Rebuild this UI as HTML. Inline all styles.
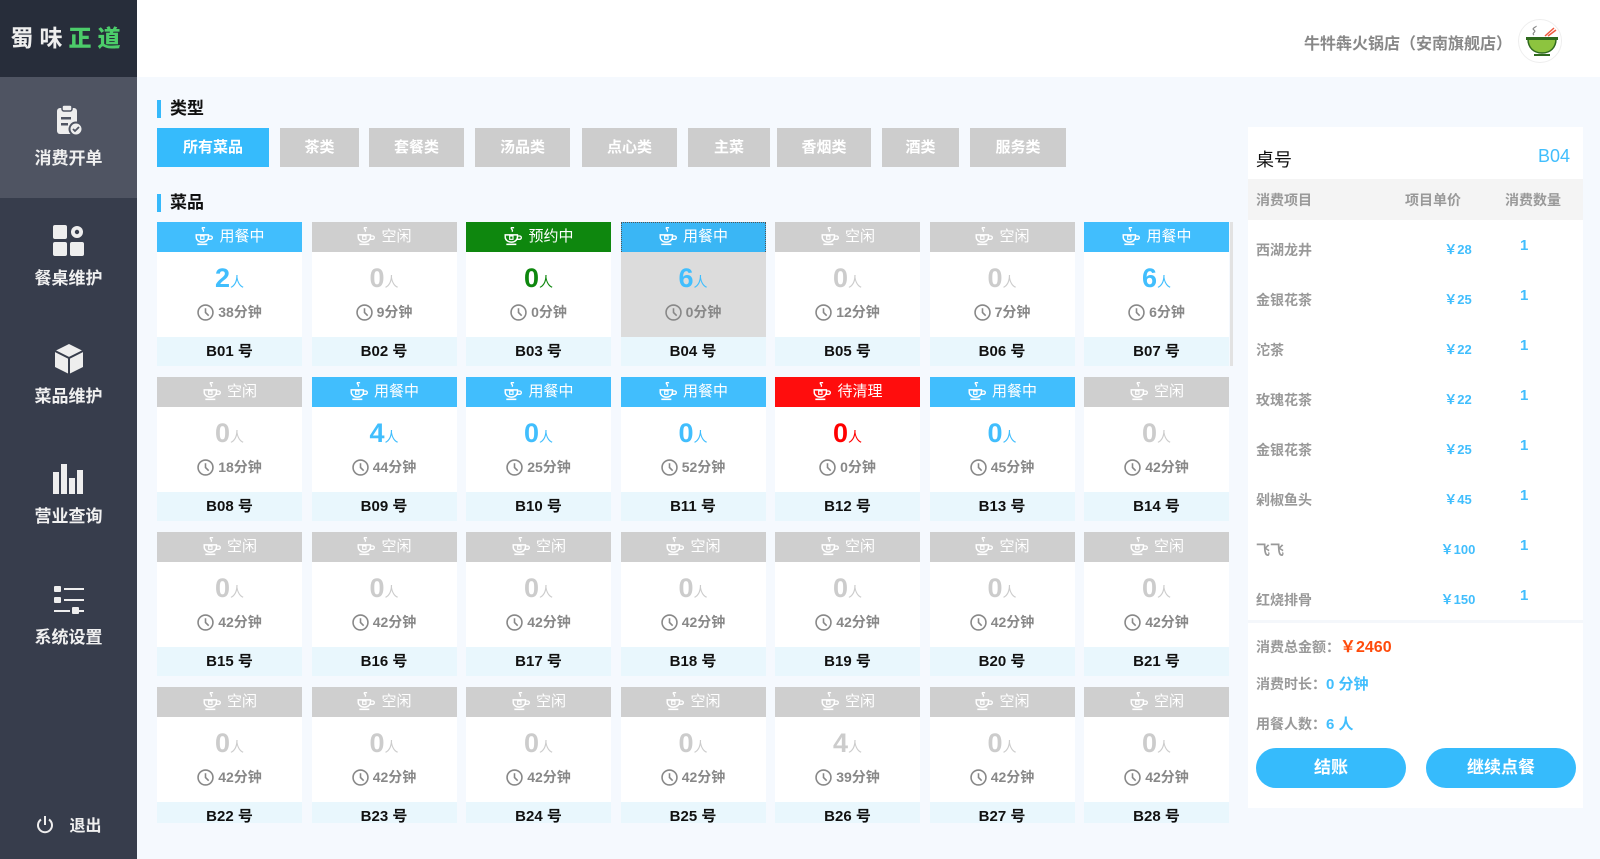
<!DOCTYPE html>
<html><head><meta charset="utf-8"><style>
*{margin:0;padding:0;box-sizing:border-box}
body{width:1600px;height:859px;overflow:hidden;background:#f5f9fe;font-family:"Liberation Sans","Noto Sans CJK SC",sans-serif;position:relative}
.side{position:absolute;left:0;top:0;width:137px;height:859px;background:#373d4c}
.logo{position:absolute;left:0;top:0;width:137px;height:77px;background:#272d3a;color:#eee;font-size:23px;font-weight:bold;text-align:center;line-height:77px;letter-spacing:6px}
.logo b{color:#4ccc6a}
.active{position:absolute;left:0;top:77px;width:137px;height:121px;background:#4f5462}
.mi{position:absolute;left:0;width:137px;text-align:center;color:#f0f0f0;font-size:17px;font-weight:bold}
.mi svg{display:block;margin:0 auto 6px}
.top{position:absolute;left:137px;top:0;right:0;height:77px;background:#fff}
.store{position:absolute;left:1304px;top:30px;color:#888;font-size:16px;font-weight:bold}
.av{position:absolute;left:1518px;top:19px;width:44px;height:44px;border-radius:50%;border:1px solid #eee;background:#fff}
.ttl{position:absolute;left:157px;font-size:17px;font-weight:bold;color:#111;padding-left:9px;border-left:4px solid #36b9fb;line-height:18px}
.tab{position:absolute;top:128px;height:39px;background:#cdcdcd;color:#fff;font-size:15px;font-weight:bold;text-align:center;line-height:39px}
.grid{position:absolute;left:157px;top:222px;width:1075px;height:601px;overflow:hidden;display:grid;grid-template-columns:repeat(7,145px);column-gap:9.5px;row-gap:11px;grid-auto-rows:144px}
.c{background:#fff;position:relative}
.h{height:30px;color:#fff;font-size:15px;text-align:center;line-height:30px}
.h svg{vertical-align:-5px;margin-right:5px}
.u{background:#41befd}.i{background:#cfcfcf}.g{background:#0e870e}.r{background:#ff0d0d}
.n{position:absolute;top:41px;width:100%;text-align:center;font-size:27px;font-weight:bold;line-height:30px}
.n small{font-size:14px;font-weight:normal}
.t{position:absolute;top:80px;width:100%;text-align:center;color:#888;font-size:14px;font-weight:bold}
.t svg{vertical-align:-4px;margin-right:4px}
.f{position:absolute;top:115px;height:29px;width:100%;background:#e9f7fd;text-align:center;line-height:29px;font-weight:bold;font-size:15px;color:#111}
.sel .b{position:absolute;top:30px;left:0;width:100%;height:85px;background:#dcdcdc}
.sel{outline:1px dotted #555;outline-offset:-1px}
.panel{position:absolute;left:1248px;top:127px;width:335px;height:681px;background:#fff}
.ph{position:absolute;left:1248px;top:179px;width:335px;height:41px;background:#f4f4f4;color:#999;font-size:14px;font-weight:bold}
.row{position:absolute;left:1256px;font-size:14px;font-weight:bold;color:#999}
.pr{position:absolute;left:1430px;width:56px;text-align:center;color:#41befd;font-size:13px;font-weight:bold}
.q{position:absolute;left:1520px;color:#41befd;font-size:15px;font-weight:bold}
.sum{position:absolute;left:1256px;font-size:14px;font-weight:bold;color:#999}
.btn{position:absolute;top:748px;width:150px;height:40px;border-radius:20px;background:#36bbfc;color:#fff;font-size:17px;font-weight:bold;text-align:center;line-height:40px}
</style></head><body>
<div class="side">
<div class="logo">蜀味<b>正道</b></div>
<div class="active"></div>
<div class="mi" style="top:104px"><svg width="30" height="34" viewBox="0 0 30 34"><rect x="3" y="4" width="20" height="26" rx="3" fill="#eee"/><rect x="8" y="1" width="10" height="6" rx="2" fill="#eee" stroke="#4f5462" stroke-width="1.5"/><rect x="7" y="13" width="10" height="2.5" fill="#4f5462"/><rect x="7" y="19" width="7" height="2.5" fill="#4f5462"/><circle cx="22" cy="25" r="6.5" fill="#eee" stroke="#4f5462" stroke-width="2"/><path d="M19 25l2 2 4-4" stroke="#4f5462" stroke-width="1.8" fill="none"/></svg>消费开单</div>
<div class="mi" style="top:224px"><svg width="34" height="34" viewBox="0 0 34 34"><rect x="1" y="1" width="14" height="14" rx="2" fill="#eee"/><circle cx="25" cy="8" r="6" fill="#eee"/><circle cx="25" cy="8" r="2.2" fill="#373d4c"/><rect x="1" y="18" width="14" height="14" rx="2" fill="#eee"/><rect x="18" y="18" width="14" height="14" rx="2" fill="#eee"/></svg>餐桌维护</div>
<div class="mi" style="top:342px"><svg width="32" height="34" viewBox="0 0 32 34"><path d="M16 2L30 9V25L16 32L2 25V9Z" fill="#eee"/><path d="M2 9L16 16L30 9M16 16V32" stroke="#373d4c" stroke-width="2" fill="none"/></svg>菜品维护</div>
<div class="mi" style="top:462px"><svg width="36" height="34" viewBox="0 0 36 34"><rect x="2" y="10" width="6" height="22" fill="#eee"/><rect x="10" y="2" width="6" height="30" fill="#eee"/><rect x="18" y="16" width="6" height="16" fill="#eee"/><rect x="26" y="8" width="6" height="24" fill="#eee"/></svg>营业查询</div>
<div class="mi" style="top:583px"><svg width="34" height="34" viewBox="0 0 34 34"><rect x="2" y="3" width="7" height="6" rx="1" fill="#eee"/><rect x="12" y="5" width="20" height="2" fill="#eee"/><rect x="2" y="14" width="7" height="6" rx="1" fill="#eee"/><rect x="12" y="16" width="20" height="2" fill="#eee"/><rect x="2" y="27" width="16" height="2" fill="#eee"/><rect x="20" y="24" width="7" height="7" rx="1" fill="#eee"/><rect x="27" y="27" width="5" height="2" fill="#eee"/></svg>系统设置</div>
<div class="mi" style="top:812px;font-size:16px"><svg width="20" height="20" viewBox="0 0 20 20" style="display:inline-block;vertical-align:-4px;margin:0 14px 0 0"><path d="M6 4.5A7 7 0 1 0 14 4.5" stroke="#eee" stroke-width="2" fill="none"/><path d="M10 1V10" stroke="#eee" stroke-width="2"/></svg>退出</div>
</div>
<div class="top"></div>
<div class="store">牛牪犇火锅店（安南旗舰店）</div>
<div class="av"><svg width="44" height="44" viewBox="0 0 44 44"><path d="M9 19H37C37 28 31 33 23 33S9 28 9 19Z" fill="#8dc43f" stroke="#2f6a1e" stroke-width="1.5"/><rect x="7" y="17" width="32" height="3" fill="#2f6a1e"/><rect x="15" y="34" width="16" height="2" fill="#2f6a1e"/><path d="M26 16L35 8M29 16L37 10" stroke="#f05a40" stroke-width="1.5"/><path d="M15 15c-3-2 3-3 0-5s3-3 2-4" stroke="#888" stroke-width="1.2" fill="none"/></svg></div>
<div class="ttl" style="top:100px">类型</div>
<div class="tab" style="left:157px;width:112px;background:#36bbfc">所有菜品</div>
<div class="tab" style="left:280px;width:79px">茶类</div>
<div class="tab" style="left:369px;width:95px">套餐类</div>
<div class="tab" style="left:475px;width:95px">汤品类</div>
<div class="tab" style="left:582px;width:95px">点心类</div>
<div class="tab" style="left:688px;width:82px">主菜</div>
<div class="tab" style="left:777px;width:94px">香烟类</div>
<div class="tab" style="left:882px;width:77px">酒类</div>
<div class="tab" style="left:970px;width:96px">服务类</div>
<div class="ttl" style="top:194px">菜品</div>
<svg width="0" height="0" style="position:absolute"><defs>
<symbol id="cup" viewBox="0 0 18 18"><path d="M7 1.5h3M8 1.5c-2 1 2 2 0 3.5" stroke="#fff" stroke-width="1.2" fill="none"/><path d="M2 8h11v2a5.5 4.5 0 0 1-11 0z" stroke="#fff" stroke-width="1.3" fill="none"/><path d="M13 9h2a1.5 1.5 0 0 1 0 3h-2.5" stroke="#fff" stroke-width="1.2" fill="none"/><rect x="6" y="9" width="3" height="3" stroke="#fff" stroke-width="1" fill="none"/><path d="M3 16.5h9" stroke="#fff" stroke-width="1.4"/></symbol>
<symbol id="clk" viewBox="0 0 16 16"><circle cx="8" cy="8" r="7" stroke="#888" stroke-width="1.5" fill="none"/><path d="M8 4v4l3 3" stroke="#888" stroke-width="1.5" fill="none"/></symbol></defs></svg>
<div class="grid">
<div class="c"><div class="h u"><svg width="20" height="20"><use href="#cup"/></svg>用餐中</div><div class="n" style="color:#41befd">2<small>人</small></div><div class="t"><svg width="17" height="17"><use href="#clk"/></svg>38分钟</div><div class="f">B01 号</div></div>
<div class="c"><div class="h i"><svg width="20" height="20"><use href="#cup"/></svg>空闲</div><div class="n" style="color:#ccc">0<small>人</small></div><div class="t"><svg width="17" height="17"><use href="#clk"/></svg>9分钟</div><div class="f">B02 号</div></div>
<div class="c"><div class="h g"><svg width="20" height="20"><use href="#cup"/></svg>预约中</div><div class="n" style="color:#0e870e">0<small>人</small></div><div class="t"><svg width="17" height="17"><use href="#clk"/></svg>0分钟</div><div class="f">B03 号</div></div>
<div class="c sel"><div class="b"></div><div class="h u" style="background:#3ab6f5"><svg width="20" height="20"><use href="#cup"/></svg>用餐中</div><div class="n" style="color:#41befd">6<small>人</small></div><div class="t"><svg width="17" height="17"><use href="#clk"/></svg>0分钟</div><div class="f">B04 号</div></div>
<div class="c"><div class="h i"><svg width="20" height="20"><use href="#cup"/></svg>空闲</div><div class="n" style="color:#ccc">0<small>人</small></div><div class="t"><svg width="17" height="17"><use href="#clk"/></svg>12分钟</div><div class="f">B05 号</div></div>
<div class="c"><div class="h i"><svg width="20" height="20"><use href="#cup"/></svg>空闲</div><div class="n" style="color:#ccc">0<small>人</small></div><div class="t"><svg width="17" height="17"><use href="#clk"/></svg>7分钟</div><div class="f">B06 号</div></div>
<div class="c"><div class="h u"><svg width="20" height="20"><use href="#cup"/></svg>用餐中</div><div class="n" style="color:#41befd">6<small>人</small></div><div class="t"><svg width="17" height="17"><use href="#clk"/></svg>6分钟</div><div class="f">B07 号</div></div>

<div class="c"><div class="h i"><svg width="20" height="20"><use href="#cup"/></svg>空闲</div><div class="n" style="color:#ccc">0<small>人</small></div><div class="t"><svg width="17" height="17"><use href="#clk"/></svg>18分钟</div><div class="f">B08 号</div></div>
<div class="c"><div class="h u"><svg width="20" height="20"><use href="#cup"/></svg>用餐中</div><div class="n" style="color:#41befd">4<small>人</small></div><div class="t"><svg width="17" height="17"><use href="#clk"/></svg>44分钟</div><div class="f">B09 号</div></div>
<div class="c"><div class="h u"><svg width="20" height="20"><use href="#cup"/></svg>用餐中</div><div class="n" style="color:#41befd">0<small>人</small></div><div class="t"><svg width="17" height="17"><use href="#clk"/></svg>25分钟</div><div class="f">B10 号</div></div>
<div class="c"><div class="h u"><svg width="20" height="20"><use href="#cup"/></svg>用餐中</div><div class="n" style="color:#41befd">0<small>人</small></div><div class="t"><svg width="17" height="17"><use href="#clk"/></svg>52分钟</div><div class="f">B11 号</div></div>
<div class="c"><div class="h r"><svg width="20" height="20"><use href="#cup"/></svg>待清理</div><div class="n" style="color:#f00">0<small>人</small></div><div class="t"><svg width="17" height="17"><use href="#clk"/></svg>0分钟</div><div class="f">B12 号</div></div>
<div class="c"><div class="h u"><svg width="20" height="20"><use href="#cup"/></svg>用餐中</div><div class="n" style="color:#41befd">0<small>人</small></div><div class="t"><svg width="17" height="17"><use href="#clk"/></svg>45分钟</div><div class="f">B13 号</div></div>
<div class="c"><div class="h i"><svg width="20" height="20"><use href="#cup"/></svg>空闲</div><div class="n" style="color:#ccc">0<small>人</small></div><div class="t"><svg width="17" height="17"><use href="#clk"/></svg>42分钟</div><div class="f">B14 号</div></div>

<div class="c"><div class="h i"><svg width="20" height="20"><use href="#cup"/></svg>空闲</div><div class="n" style="color:#ccc">0<small>人</small></div><div class="t"><svg width="17" height="17"><use href="#clk"/></svg>42分钟</div><div class="f">B15 号</div></div>
<div class="c"><div class="h i"><svg width="20" height="20"><use href="#cup"/></svg>空闲</div><div class="n" style="color:#ccc">0<small>人</small></div><div class="t"><svg width="17" height="17"><use href="#clk"/></svg>42分钟</div><div class="f">B16 号</div></div>
<div class="c"><div class="h i"><svg width="20" height="20"><use href="#cup"/></svg>空闲</div><div class="n" style="color:#ccc">0<small>人</small></div><div class="t"><svg width="17" height="17"><use href="#clk"/></svg>42分钟</div><div class="f">B17 号</div></div>
<div class="c"><div class="h i"><svg width="20" height="20"><use href="#cup"/></svg>空闲</div><div class="n" style="color:#ccc">0<small>人</small></div><div class="t"><svg width="17" height="17"><use href="#clk"/></svg>42分钟</div><div class="f">B18 号</div></div>
<div class="c"><div class="h i"><svg width="20" height="20"><use href="#cup"/></svg>空闲</div><div class="n" style="color:#ccc">0<small>人</small></div><div class="t"><svg width="17" height="17"><use href="#clk"/></svg>42分钟</div><div class="f">B19 号</div></div>
<div class="c"><div class="h i"><svg width="20" height="20"><use href="#cup"/></svg>空闲</div><div class="n" style="color:#ccc">0<small>人</small></div><div class="t"><svg width="17" height="17"><use href="#clk"/></svg>42分钟</div><div class="f">B20 号</div></div>
<div class="c"><div class="h i"><svg width="20" height="20"><use href="#cup"/></svg>空闲</div><div class="n" style="color:#ccc">0<small>人</small></div><div class="t"><svg width="17" height="17"><use href="#clk"/></svg>42分钟</div><div class="f">B21 号</div></div>

<div class="c"><div class="h i"><svg width="20" height="20"><use href="#cup"/></svg>空闲</div><div class="n" style="color:#ccc">0<small>人</small></div><div class="t"><svg width="17" height="17"><use href="#clk"/></svg>42分钟</div><div class="f">B22 号</div></div>
<div class="c"><div class="h i"><svg width="20" height="20"><use href="#cup"/></svg>空闲</div><div class="n" style="color:#ccc">0<small>人</small></div><div class="t"><svg width="17" height="17"><use href="#clk"/></svg>42分钟</div><div class="f">B23 号</div></div>
<div class="c"><div class="h i"><svg width="20" height="20"><use href="#cup"/></svg>空闲</div><div class="n" style="color:#ccc">0<small>人</small></div><div class="t"><svg width="17" height="17"><use href="#clk"/></svg>42分钟</div><div class="f">B24 号</div></div>
<div class="c"><div class="h i"><svg width="20" height="20"><use href="#cup"/></svg>空闲</div><div class="n" style="color:#ccc">0<small>人</small></div><div class="t"><svg width="17" height="17"><use href="#clk"/></svg>42分钟</div><div class="f">B25 号</div></div>
<div class="c"><div class="h i"><svg width="20" height="20"><use href="#cup"/></svg>空闲</div><div class="n" style="color:#ccc">4<small>人</small></div><div class="t"><svg width="17" height="17"><use href="#clk"/></svg>39分钟</div><div class="f">B26 号</div></div>
<div class="c"><div class="h i"><svg width="20" height="20"><use href="#cup"/></svg>空闲</div><div class="n" style="color:#ccc">0<small>人</small></div><div class="t"><svg width="17" height="17"><use href="#clk"/></svg>42分钟</div><div class="f">B27 号</div></div>
<div class="c"><div class="h i"><svg width="20" height="20"><use href="#cup"/></svg>空闲</div><div class="n" style="color:#ccc">0<small>人</small></div><div class="t"><svg width="17" height="17"><use href="#clk"/></svg>42分钟</div><div class="f">B28 号</div></div>
</div>
<div style="position:absolute;left:1230px;top:222px;width:3px;height:144px;background:#e2e2e2"></div>

<div class="panel"></div>
<div style="position:absolute;left:1256px;top:146px;font-size:18px;color:#111">桌号</div>
<div style="position:absolute;left:1538px;top:146px;font-size:18px;color:#41befd">B04</div>
<div class="ph"><span style="position:absolute;left:8px;top:11px">消费项目</span><span style="position:absolute;left:157px;top:11px">项目单价</span><span style="position:absolute;left:257px;top:11px">消费数量</span></div>
<div class="row" style="top:240px">西湖龙井</div><div class="pr" style="top:239px">￥28</div><div class="q" style="top:237px">1</div>
<div class="row" style="top:290px">金银花茶</div><div class="pr" style="top:289px">￥25</div><div class="q" style="top:287px">1</div>
<div class="row" style="top:340px">沱茶</div><div class="pr" style="top:339px">￥22</div><div class="q" style="top:337px">1</div>
<div class="row" style="top:390px">玫瑰花茶</div><div class="pr" style="top:389px">￥22</div><div class="q" style="top:387px">1</div>
<div class="row" style="top:440px">金银花茶</div><div class="pr" style="top:439px">￥25</div><div class="q" style="top:437px">1</div>
<div class="row" style="top:490px">剁椒鱼头</div><div class="pr" style="top:489px">￥45</div><div class="q" style="top:487px">1</div>
<div class="row" style="top:540px">飞飞</div><div class="pr" style="top:539px">￥100</div><div class="q" style="top:537px">1</div>
<div class="row" style="top:590px">红烧排骨</div><div class="pr" style="top:589px">￥150</div><div class="q" style="top:587px">1</div>
<div style="position:absolute;left:1248px;top:620px;width:335px;height:3px;background:#f4f7fb"></div>
<div class="sum" style="top:633px">消费总金额：<span style="color:#ff4a0a;font-size:16px">￥2460</span></div>
<div class="sum" style="top:673px">消费时长：<span style="color:#41befd;font-size:15px">0 分钟</span></div>
<div class="sum" style="top:713px">用餐人数：<span style="color:#41befd;font-size:15px">6 人</span></div>
<div class="btn" style="left:1256px">结账</div>
<div class="btn" style="left:1426px">继续点餐</div>
</body></html>
